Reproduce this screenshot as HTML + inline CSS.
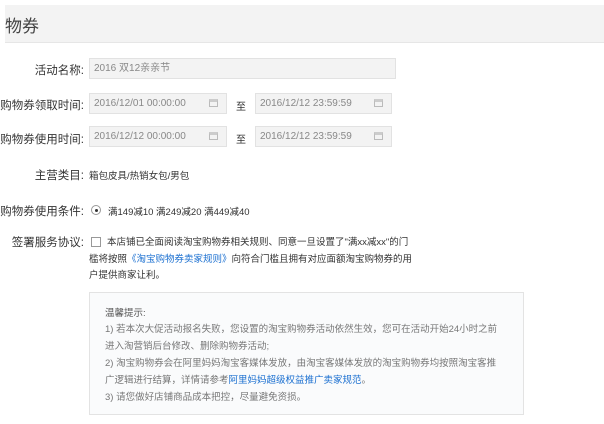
<html><head><style>
body{margin:0;width:604px;height:424px;background:#fff;font-family:"Liberation Sans","Noto Sans CJK SC",sans-serif;position:relative;overflow:hidden;color:#333}
.a{position:absolute;white-space:nowrap}
.hd{left:5px;top:5px;width:600px;height:37px;background:#f3f3f3;border-bottom:1px solid #e6e6e6}
.lb{font-size:11.5px;color:#333;width:84px;left:0;height:16px;overflow:hidden}
.lb span{position:absolute;right:0;top:0}
.in{background:#f3f3f3;border:1px solid #e2e2e2;height:21px;box-sizing:border-box;font-size:10px;color:#888;line-height:20px;padding-left:4px}
.cal{position:absolute;right:8px;top:5px;width:9px;height:8px;border:1px solid #bbb;border-top:3px solid #ccc;box-sizing:border-box}
.t{font-size:10px;color:#333}
.tip{left:89px;top:292px;width:435px;height:123px;box-sizing:border-box;border:1px solid #e3e3e3;background:#fafbfc}
.tl{font-size:9.5px;color:#777;left:105px}
a{color:#1a6fd0;text-decoration:none}
</style></head><body>
<div class="a hd"></div>
<div class="a" style="left:5px;top:12px;font-size:17px;color:#444">物券</div>

<div class="a lb" style="top:62px"><span>活动名称:</span></div>
<div class="a in" style="left:89px;top:58px;width:307px">2016 双12亲亲节</div>

<div class="a lb" style="top:97px"><span>购物券领取时间:</span></div>
<div class="a in" style="left:89px;top:93px;width:138px">2016/12/01 00:00:00<span class="cal"></span></div>
<div class="a t" style="left:236px;top:98px">至</div>
<div class="a in" style="left:255px;top:93px;width:137px">2016/12/12 23:59:59<span class="cal"></span></div>

<div class="a lb" style="top:131px"><span>购物券使用时间:</span></div>
<div class="a in" style="left:89px;top:126px;width:138px">2016/12/12 00:00:00<span class="cal"></span></div>
<div class="a t" style="left:236px;top:131px">至</div>
<div class="a in" style="left:255px;top:126px;width:137px">2016/12/12 23:59:59<span class="cal"></span></div>

<div class="a lb" style="top:167px"><span>主营类目:</span></div>
<div class="a t" style="left:89px;top:168px;font-size:9.5px">箱包皮具/热销女包/男包</div>

<div class="a lb" style="top:203px"><span>购物券使用条件:</span></div>
<div class="a" style="left:91px;top:205px;width:10px;height:10px;border:1px solid #999;border-radius:50%;box-sizing:border-box"><div style="width:3px;height:3px;background:#333;border-radius:50%;margin:2.5px"></div></div>
<div class="a t" style="left:108px;top:204px;font-size:9.5px">满149减10 满249减20 满449减40</div>

<div class="a lb" style="top:234px"><span>签署服务协议:</span></div>
<div class="a" style="left:91px;top:237px;width:10px;height:10px;border:1px solid #999;box-sizing:border-box"></div>
<div class="a t" style="left:107px;top:234px;font-size:9.5px">本店铺已全面阅读淘宝购物券相关规则、同意一旦设置了"满xx减xx"的门</div>
<div class="a t" style="left:89px;top:251px;font-size:9.5px">槛将按照<a>《淘宝购物券卖家规则》</a>向符合门槛且拥有对应面额淘宝购物券的用</div>
<div class="a t" style="left:89px;top:267px;font-size:9.5px">户提供商家让利。</div>

<div class="a tip"></div>
<div class="a tl" style="top:305px;color:#555">温馨提示:</div>
<div class="a tl" style="top:321px">1) 若本次大促活动报名失败，您设置的淘宝购物券活动依然生效，您可在活动开始24小时之前</div>
<div class="a tl" style="top:338px">进入淘营销后台修改、删除购物券活动;</div>
<div class="a tl" style="top:355px">2) 淘宝购物券会在阿里妈妈淘宝客媒体发放，由淘宝客媒体发放的淘宝购物券均按照淘宝客推</div>
<div class="a tl" style="top:372px">广逻辑进行结算，详情请参考<a>阿里妈妈超级权益推广卖家规范</a>。</div>
<div class="a tl" style="top:389px">3) 请您做好店铺商品成本把控，尽量避免资损。</div>
</body></html>
